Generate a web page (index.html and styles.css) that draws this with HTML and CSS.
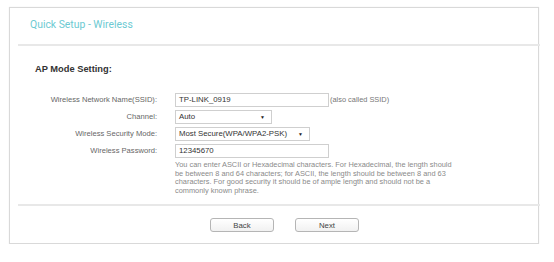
FILE: index.html
```html
<!DOCTYPE html>
<html>
<head>
    <link rel="stylesheet" href="styles.css">
    <title>Quick Setup - Wireless</title>
</head>
<body>
    <div class="panel">
        <div class="panel-head">Quick Setup - Wireless</div>
        <div class="rule"></div>

        <h2 class="section-title">AP Mode Setting:</h2>

        <div class="form">
            <div class="row">
                <label class="label">Wireless Network Name(SSID):</label>
                <div class="field">
                    <div class="input-text wide">TP-LINK_0919</div>
                    <span class="note">(also called SSID)</span>
                </div>
            </div>
            <div class="row">
                <label class="label">Channel:</label>
                <div class="field">
                    <div class="select short"><span>Auto</span><span class="arrow">&#9660;</span></div>
                </div>
            </div>
            <div class="row">
                <label class="label">Wireless Security Mode:</label>
                <div class="field">
                    <div class="select mid"><span>Most Secure(WPA/WPA2-PSK)</span><span class="arrow">&#9660;</span></div>
                </div>
            </div>
            <div class="row">
                <label class="label">Wireless Password:</label>
                <div class="field">
                    <div class="input-text wide">12345670</div>
                </div>
            </div>
            <div class="row">
                <div></div>
                <p class="help">You can enter ASCII or Hexadecimal characters. For Hexadecimal, the length should be between 8 and 64 characters; for ASCII, the length should be between 8 and 63 characters. For good security it should be of ample length and should not be a commonly known phrase.</p>
            </div>
        </div>

        <div class="rule bottom"></div>

        <div class="buttons">
            <button class="btn" type="button">Back</button>
            <button class="btn" type="button">Next</button>
        </div>
    </div>
</body>
</html>
```

FILE: styles.css
```css
body {
    margin: 0;
    background: #fff;
    font-family: "Liberation Sans", Arial, sans-serif;
}

.panel {
    margin: 7px 0 0 9px;
    width: 528px;
    height: 235px;
    border: 1px solid #d9d9d9;
    box-shadow: 0 0 1px #e6e6e6;
}

.panel-head {
    height: 36px;
    line-height: 34px;
    padding-left: 20px;
    font-family: Roboto, "Open Sans", sans-serif;
    font-size: 10.4px;
    color: #6ccad2;
}

.rule {
    margin-left: 8px;
    margin-right: -2px;
    height: 2px;
    background: #e8e8e8;
}

.section-title {
    margin: 18px 0 0 25px;
    font-size: 9.3px;
    line-height: 10px;
    font-weight: bold;
    color: #333;
}

.form {
    margin-top: 17px;
}

.row {
    display: grid;
    grid-template-columns: 147px 1fr;
    column-gap: 18px;
    align-items: center;
    min-height: 17px;
}

.label {
    text-align: right;
    font-size: 7.6px;
    color: #666;
}

.field {
    display: flex;
    align-items: center;
}

.input-text,
.select {
    box-sizing: border-box;
    height: 14px;
    border: 1px solid #cfcfcf;
    background: #fff;
    padding: 0 3px;
    font-size: 7.8px;
    line-height: 12px;
    color: #333;
}

.wide {
    width: 154px;
}

.short {
    width: 97px;
}

.mid {
    width: 135px;
}

.select {
    display: flex;
    justify-content: space-between;
}

.arrow {
    font-size: 5px;
    color: #222;
    padding-right: 3px;
}

.note {
    margin-left: 1px;
    font-size: 7.4px;
    color: #777;
}

.help {
    margin: 2px 0 0;
    width: 283px;
    font-size: 7.4px;
    line-height: 8.5px;
    color: #8a8a8a;
}

.rule.bottom {
    margin-top: 9px;
}

.buttons {
    display: flex;
    gap: 21px;
    padding: 12px 0 0 200px;
}

.btn {
    box-sizing: border-box;
    width: 64px;
    height: 14px;
    padding: 0;
    border: 1px solid #b5b5b5;
    border-radius: 3px;
    background: linear-gradient(#fff, #f1f1f1);
    font-family: "Liberation Sans", Arial, sans-serif;
    font-size: 7.8px;
    color: #444;
}
```
